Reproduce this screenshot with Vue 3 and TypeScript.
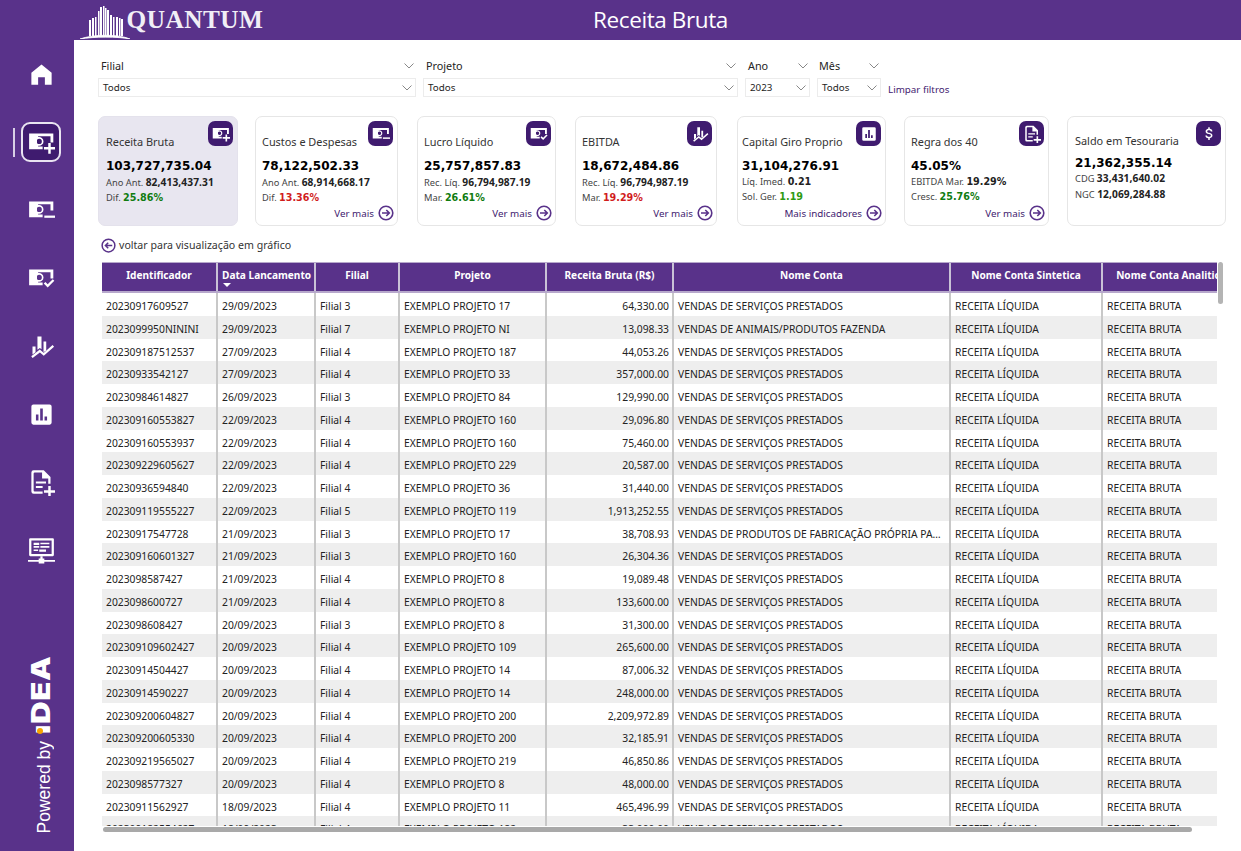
<script setup lang="ts">
interface Line {
  label: string
  value: string
  tone?: 'up' | 'down' | 'ok'
}

interface Card {
  title: string
  value: string
  icon: string
  lines: Line[]
  link?: string
  width: number
  gap: number
  pad: number
}

const bill =
  '<path d="M1 1h21.500v8h-2.500V3.500h-12v9H13V15H1z"/><path fill-rule="evenodd" d="M3 3h6v1.200a3.900 3.900 0 1 1 0 7.600V13H3zM10 5.700a2.300 2.300 0 1 0 0 4.600 2.300 2.300 0 0 0 0-4.600z"/>'

const money = (extra: string) => `<g transform="translate(0 3)">${bill}${extra}</g>`

const icons: Record<string, string> = {
  home: '<path d="M12 3 3 10.500V21h6v-6.500h6V21h6V10.500z"/>',
  plus: money('<path d="M18 9.500h2.200V13H24v2.200h-3.800V19H18v-3.800h-3.800V13H18z"/>'),
  minus: money('<path d="M14.500 13.500H24v2h-9.500z"/>'),
  check: money('<path d="m14 13.500 1.500-1.400 2 2 4.500-4.400 1.400 1.400-5.900 5.900z"/>'),
  chart:
    '<path d="M4 12h2.700v5.200L4 19.200zM8.400 3H12v11.500l-1.500-1.200-2.100 1.600zM13.800 7.500h2.400v8l-2.400 1.500z"/><path fill="none" stroke="currentColor" stroke-width="2" d="M3.500 21.500 10.500 16l3.500 3 8.500-7.500"/>',
  bar: '<g transform="translate(1.200 1.200) scale(.9)"><path fill-rule="evenodd" d="M4 2h16a2 2 0 0 1 2 2v16a2 2 0 0 1-2 2H4a2 2 0 0 1-2-2V4a2 2 0 0 1 2-2zm2.500 10v6H9v-6zm4.200-6v12h2.600V6zm4.300 8v4h2.500v-4z"/></g>',
  doc: '<path fill-rule="evenodd" d="M5 1h9l6 6v6h-2V8.500h-5.500V3H6a1 1 0 0 0-1 1v15a1 1 0 0 0 1 1h7v2H5a2 2 0 0 1-2-2V3a2 2 0 0 1 2-2z"/><path d="M7 11h9v1.800H7zM7 15h6v1.800H7zM18 15h2.200v3.800H24V21h-3.800v3H18v-3h-3.800v-2.200H18z"/>',
  monitor:
    '<path fill-rule="evenodd" d="M2 1h20a1 1 0 0 1 1 1v14a1 1 0 0 1-1 1H2a1 1 0 0 1-1-1V2a1 1 0 0 1 1-1zm1 2v12h18V3z"/><path d="M5 5h5v2H5zM11 5h8v1.500h-8zM5 8h5v1.500H5zM11 8h8v1.500h-8zM5 11h4v1.500H5zM10 11h6v2h-6zM11 17h2v2h1.500v1.500H24V22h-9.500v1.500h-5V22H0v-1.500h9.500V19H11z"/>',
  dollar:
    '<path d="M11 3h2v2.100c2 .3 3.400 1.500 3.600 3.400h-2.200c-.2-1-1-1.600-2.400-1.600-1.500 0-2.400.6-2.400 1.600 0 1 .8 1.400 2.800 1.900 2.500.6 4.200 1.400 4.200 3.700 0 1.900-1.400 3.100-3.600 3.500V20h-2v-2.400c-2.200-.3-3.800-1.600-3.900-3.700h2.200c.2 1.200 1.100 1.900 2.700 1.900s2.500-.7 2.500-1.700c0-1-.8-1.500-2.800-2-2.500-.6-4.200-1.400-4.200-3.600 0-1.800 1.400-3 3.500-3.400z"/>',
}

const nav = ['home', 'plus', 'minus', 'check', 'chart', 'bar', 'doc', 'monitor']

const towers = [
  [9, 17, 2], [12, 15, 2], [15, 14, 1.5], [18, 8, 1.5], [20, 4, 2], [23, 3, 1.5], [25, 5, 1.5],
  [27, 7, 2], [30, 12, 2], [33, 14, 1.5], [36, 14, 2], [39, 15, 1.5], [41, 16, 2],
]

const cards: Card[] = [
  {
    title: 'Receita Bruta',
    value: '103,727,735.04',
    icon: 'plus',
    lines: [
      { label: 'Ano Ant.', value: '82,413,437.31' },
      { label: 'Dif.', value: '25.86%', tone: 'up' },
    ],
    width: 140,
    gap: 17,
    pad: 7,
  },
  {
    title: 'Custos e Despesas',
    value: '78,122,502.33',
    icon: 'minus',
    lines: [
      { label: 'Ano Ant.', value: '68,914,668.17' },
      { label: 'Dif.', value: '13.36%', tone: 'down' },
    ],
    link: 'Ver mais',
    width: 143,
    gap: 19,
    pad: 6,
  },
  {
    title: 'Lucro Líquido',
    value: '25,757,857.83',
    icon: 'check',
    lines: [
      { label: 'Rec. Líq.', value: '96,794,987.19' },
      { label: 'Mar.', value: '26.61%', tone: 'up' },
    ],
    link: 'Ver mais',
    width: 139,
    gap: 19,
    pad: 6,
  },
  {
    title: 'EBITDA',
    value: '18,672,484.86',
    icon: 'chart',
    lines: [
      { label: 'Rec. Líq.', value: '96,794,987.19' },
      { label: 'Mar.', value: '19.29%', tone: 'down' },
    ],
    link: 'Ver mais',
    width: 142,
    gap: 20,
    pad: 6,
  },
  {
    title: 'Capital Giro Proprio',
    value: '31,104,276.91',
    icon: 'bar',
    lines: [
      { label: 'Líq. Imed.', value: '0.21' },
      { label: 'Sol. Ger.', value: '1.19', tone: 'ok' },
    ],
    link: 'Mais indicadores',
    width: 149,
    gap: 18,
    pad: 4,
  },
  {
    title: 'Regra dos 40',
    value: '45.05%',
    icon: 'doc',
    lines: [
      { label: 'EBITDA Mar.', value: '19.29%' },
      { label: 'Cresc.', value: '25.76%', tone: 'up' },
    ],
    link: 'Ver mais',
    width: 145,
    gap: 18,
    pad: 6,
  },
  {
    title: 'Saldo em Tesouraria',
    value: '21,362,355.14',
    icon: 'dollar',
    lines: [
      { label: 'CDG', value: '33,431,640.02' },
      { label: 'NGC', value: '12,069,284.88' },
    ],
    width: 159,
    gap: 0,
    pad: 7,
  },
]

const filters = [
  { label: 'Filial', value: 'Todos', kind: 'filial' },
  { label: 'Projeto', value: 'Todos', kind: 'projeto' },
  { label: 'Ano', value: '2023', kind: 'ano' },
  { label: 'Mês', value: 'Todos', kind: 'mes' },
]

const columns = [
  'Identificador',
  'Data Lancamento',
  'Filial',
  'Projeto',
  'Receita Bruta (R$)',
  'Nome Conta',
  'Nome Conta Sintetica',
  'Nome Conta Analitica',
]

const servicos = 'VENDAS DE SERVIÇOS PRESTADOS'

const rows: [string, string, number, string, string, string][] = [
  ['20230917609527', '29/09/2023', 3, '17', '64,330.00', servicos],
  ['2023099950NININI', '29/09/2023', 7, 'NI', '13,098.33', 'VENDAS DE ANIMAIS/PRODUTOS FAZENDA'],
  ['202309187512537', '27/09/2023', 4, '187', '44,053.26', servicos],
  ['20230933542127', '27/09/2023', 4, '33', '357,000.00', servicos],
  ['20230984614827', '26/09/2023', 3, '84', '129,990.00', servicos],
  ['202309160553827', '22/09/2023', 4, '160', '29,096.80', servicos],
  ['202309160553937', '22/09/2023', 4, '160', '75,460.00', servicos],
  ['202309229605627', '22/09/2023', 4, '229', '20,587.00', servicos],
  ['20230936594840', '22/09/2023', 4, '36', '31,440.00', servicos],
  ['202309119555227', '22/09/2023', 5, '119', '1,913,252.55', servicos],
  ['20230917547728', '21/09/2023', 3, '17', '38,708.93', 'VENDAS DE PRODUTOS DE FABRICAÇÃO PRÓPRIA PARA VENDA'],
  ['202309160601327', '21/09/2023', 3, '160', '26,304.36', servicos],
  ['2023098587427', '21/09/2023', 4, '8', '19,089.48', servicos],
  ['2023098600727', '21/09/2023', 4, '8', '133,600.00', servicos],
  ['2023098608427', '20/09/2023', 3, '8', '31,300.00', servicos],
  ['202309109602427', '20/09/2023', 4, '109', '265,600.00', servicos],
  ['20230914504427', '20/09/2023', 4, '14', '87,006.32', servicos],
  ['20230914590227', '20/09/2023', 4, '14', '248,000.00', servicos],
  ['202309200604827', '20/09/2023', 4, '200', '2,209,972.89', servicos],
  ['202309200605330', '20/09/2023', 4, '200', '32,185.91', servicos],
  ['202309219565027', '20/09/2023', 4, '219', '46,850.86', servicos],
  ['2023098577327', '20/09/2023', 4, '8', '48,000.00', servicos],
  ['20230911562927', '18/09/2023', 4, '11', '465,496.99', servicos],
  ['202309182554627', '18/09/2023', 4, '182', '33,000.00', servicos],
]
</script>

<template>
  <div class="page">
    <aside class="sidebar">
      <nav class="nav">
        <div v-for="name in nav" :key="name" class="nav-item" :class="{ active: name === 'plus' }">
          <span class="nav-box">
            <svg class="nav-icon" viewBox="0 0 24 24" v-html="icons[name]"></svg>
          </span>
        </div>
      </nav>
      <div class="powered">
        <span class="powered-text">Powered by</span>
        <span class="idea"><span class="idea-i">ı</span>DEA</span>
      </div>
    </aside>

    <div class="main">
      <header class="topbar">
        <div class="logo">
          <svg class="logo-mark" viewBox="0 0 54 36">
            <rect
              v-for="t in towers"
              :key="t[0]"
              :x="t[0]"
              :y="t[1]"
              :width="t[2]"
              :height="33 - t[1]"
              fill="#fff"
            />
            <path d="M0 36C14 31 38 31 50 36 38 33.500 14 33.500 0 36z" fill="#fff" stroke="#fff" stroke-width=".8" />
          </svg>
          <span class="logo-text">QUANTUM</span>
        </div>
        <h1 class="title">Receita Bruta</h1>
      </header>

      <section class="content">
        <div class="filters">
          <div v-for="f in filters" :key="f.label" class="filter" :class="f.kind">
            <div class="filter-label">
              <span>{{ f.label }}</span>
              <svg class="chevron" viewBox="0 0 10 6"><path d="M.5.5 5 5 9.500.5" /></svg>
            </div>
            <div class="select">
              <span>{{ f.value }}</span>
              <svg class="chevron" viewBox="0 0 10 6"><path d="M.5.5 5 5 9.500.5" /></svg>
            </div>
          </div>
          <a class="clear">Limpar filtros</a>
        </div>

        <div class="cards">
          <article
            v-for="(c, i) in cards"
            :key="c.title"
            class="card"
            :class="{ current: i === 0 }"
            :style="{ width: c.width + 'px', marginRight: c.gap + 'px', paddingLeft: c.pad + 'px' }"
          >
            <span class="card-icon">
              <svg viewBox="0 0 24 24" v-html="icons[c.icon]"></svg>
            </span>
            <div class="card-title">{{ c.title }}</div>
            <div class="card-value">{{ c.value }}</div>
            <div v-for="l in c.lines" :key="l.label" class="card-line">
              {{ l.label }} <b :class="[l.tone, { wide: l.value.length < 8 }]">{{ l.value }}</b>
            </div>
            <div v-if="c.link" class="card-link">
              {{ c.link }}
              <svg class="round-arrow" viewBox="0 0 16 16">
                <circle cx="8" cy="8" r="6.800" />
                <path d="M4 8h7M8.300 5l3 3-3 3" />
              </svg>
            </div>
          </article>
        </div>

        <div class="back">
          <svg class="round-arrow" viewBox="0 0 16 16">
            <circle cx="8" cy="8" r="6.800" />
            <path d="M12 8H5M7.700 5l-3 3 3 3" />
          </svg>
          voltar para visualização em gráfico
        </div>

        <div class="table-wrap">
          <div class="table">
            <div class="thead">
              <div v-for="(col, i) in columns" :key="col" class="th" :class="{ sorted: i === 1 }">
                {{ col }}
              </div>
            </div>
            <div v-for="r in rows" :key="r[0]" class="tr">
              <div class="td">{{ r[0] }}</div>
              <div class="td">{{ r[1] }}</div>
              <div class="td">Filial {{ r[2] }}</div>
              <div class="td">EXEMPLO PROJETO {{ r[3] }}</div>
              <div class="td num">{{ r[4] }}</div>
              <div class="td">{{ r[5] }}</div>
              <div class="td">RECEITA LÍQUIDA</div>
              <div class="td">RECEITA BRUTA</div>
            </div>
          </div>
          <span class="scroll-v"></span>
          <span class="scroll-h"></span>
        </div>
      </section>
    </div>
  </div>
</template>

<style>
html,
body {
  margin: 0;
  background: #fff;
}
</style>

<style scoped>
.page {
  display: flex;
  width: 1241px;
  height: 851px;
  overflow: hidden;
  font-family: 'Noto Sans', sans-serif;
  font-size: 10.300px;
  color: #252423;
  background: #fff;
}

.sidebar {
  width: 74px;
  flex: none;
  display: flex;
  flex-direction: column;
  background: #59328a;
  padding: 40px 0 0 8px;
  box-sizing: border-box;
}

.nav-item {
  height: 68px;
  display: flex;
  align-items: center;
  justify-content: center;
  position: relative;
}

.nav-box {
  width: 40px;
  height: 40px;
  box-sizing: border-box;
  display: flex;
  align-items: center;
  justify-content: center;
  border-radius: 9px;
  color: #fff;
}

.nav-item.active .nav-box {
  background: #3f1b6f;
  border: 2px solid #e9e4f1;
}

.nav-item.active::before {
  content: '';
  position: absolute;
  left: 5px;
  top: 20px;
  width: 2px;
  height: 29px;
  background: #d9d0e6;
}

.nav-icon {
  width: 27px;
  height: 27px;
  fill: currentColor;
}

.powered {
  margin-top: auto;
  padding-bottom: 18px;
  display: flex;
  flex-direction: column-reverse;
  align-items: center;
  color: #fff;
}

.powered-text,
.idea {
  writing-mode: vertical-rl;
  white-space: nowrap;
  transform: rotate(180deg);
}

.powered-text {
  font-family: 'Liberation Sans', sans-serif;
  font-size: 17.500px;
  line-height: 20px;
  margin-left: 5px;
}

.idea {
  font-family: Inter, sans-serif;
  font-weight: 900;
  font-size: 26px;
  line-height: 24px;
  letter-spacing: 0.6px;
  margin-bottom: 13px;
  transform: rotate(180deg) scaleY(1.2);
}

.idea-i {
  position: relative;
  display: inline-block;
}

.idea-i::after {
  content: '';
  position: absolute;
  width: 6px;
  height: 5px;
  border-radius: 50%;
  background: #f5a300;
  right: 8px;
  top: 0;
}

.main {
  flex: 1;
  min-width: 0;
  display: flex;
  flex-direction: column;
}

.topbar {
  height: 40px;
  flex: none;
  display: grid;
  grid-template-columns: 1fr auto 1fr;
  align-items: center;
  padding-left: 6px;
  background: #59328a;
  color: #fff;
}

.logo {
  display: flex;
  align-items: center;
  height: 40px;
}

.logo-mark {
  width: 54px;
  height: 36px;
  flex: none;
  margin-top: 1px;
  margin-right: -7.500px;
}

.logo-text {
  font-family: 'Liberation Serif', serif;
  font-weight: 700;
  font-size: 25.300px;
  letter-spacing: 0.5px;
  color: #f1eef6;
  margin-top: -2px;
}

.title {
  margin: 0;
  font-family: 'Open Sans', sans-serif;
  font-weight: 400;
  font-size: 22.500px;
  letter-spacing: -0.4px;
  line-height: 40px;
}

.content {
  flex: 1;
  min-height: 0;
  padding: 17px 0 0 24px;
  display: flex;
  flex-direction: column;
}

.filters {
  display: flex;
  align-items: flex-end;
  height: 40px;
}

.filter {
  display: flex;
  flex-direction: column;
  flex: none;
}

.filter.filial {
  width: 318px;
  margin-right: 7px;
}

.filter.projeto {
  width: 315px;
  margin-right: 7px;
}

.filter.ano {
  width: 65px;
  margin-right: 7px;
}

.filter.mes {
  width: 64px;
  margin-right: 7px;
}

.filter-label {
  height: 21px;
  display: flex;
  align-items: center;
  justify-content: space-between;
  padding: 0 2px 4px 3px;
  box-sizing: border-box;
  font-size: 10.800px;
}

.filter.mes .filter-label {
  padding-left: 2px;
}

.select {
  height: 19px;
  box-sizing: border-box;
  border: 1px solid #ececec;
  display: flex;
  align-items: center;
  justify-content: space-between;
  padding: 0 3px 0 4px;
  font-size: 9.800px;
}

.chevron {
  width: 10px;
  height: 6px;
  fill: none;
  stroke: #7a7a7a;
  stroke-width: 0.9;
}

.clear {
  margin: 0 0 1px 0;
  color: #3f1b6f;
  font-size: 9.800px;
}

.cards {
  display: flex;
  margin-top: 19px;
}

.card {
  position: relative;
  flex: none;
  height: 110px;
  box-sizing: border-box;
  border: 1px solid #e6e6e6;
  border-radius: 7px;
  padding-top: 17px;
  background: #fff;
}

.card.current {
  background: #e8e6f0;
  border-color: #e4e2ec;
}

.card-icon {
  position: absolute;
  top: 4px;
  right: 4px;
  width: 25px;
  height: 25px;
  border-radius: 7px;
  background: #3f1b6f;
  color: #fff;
  display: flex;
  align-items: center;
  justify-content: center;
}

.card-icon svg {
  width: 18px;
  height: 18px;
  fill: currentColor;
}

.card-title {
  font-size: 10.900px;
  line-height: 16px;
  color: #333;
}

.card-value {
  margin-top: 8px;
  font-family: 'DejaVu Sans', sans-serif;
  font-weight: 700;
  font-size: 12px;
  line-height: 17px;
  color: #000;
}

.card:last-child {
  padding-top: 16px;
}

.card:last-child .card-value {
  margin-top: 6px;
  line-height: 16px;
}

.card-line {
  font-size: 9.300px;
  line-height: 14.500px;
  color: #444;
}

.card-line b {
  font-size: 10.200px;
  font-weight: 700;
  letter-spacing: 0.1px;
  color: #222;
}

.card-line b.wide {
  font-family: 'DejaVu Sans', sans-serif;
  font-size: 9.600px;
  letter-spacing: 0;
}

.card-line b.up {
  color: #107c10;
}

.card-line b.down {
  color: #d11d1d;
}

.card-line b.ok {
  color: #2f9a12;
}

.card-link {
  position: absolute;
  right: 3px;
  bottom: 4px;
  display: flex;
  align-items: center;
  gap: 4px;
  font-size: 9.800px;
  color: #3f1b6f;
}

.round-arrow {
  width: 16px;
  height: 16px;
  fill: none;
  stroke: #59328a;
  stroke-width: 1.600;
}

.back {
  display: flex;
  align-items: center;
  gap: 3px;
  height: 16px;
  margin: 11px 0 9px 3px;
  font-size: 10.600px;
  color: #333;
}

.back .round-arrow {
  width: 15px;
  height: 15px;
}

.table-wrap {
  position: relative;
  width: 1115px;
  height: 564px;
  margin-left: 4px;
}

.table {
  width: 100%;
  height: 100%;
  overflow: hidden;
}

.thead,
.tr {
  display: grid;
  grid-template-columns: 116px 98px 84px 147px 127px 277px 152px 138px;
  width: 1139px;
}

.thead {
  height: 31px;
  box-sizing: border-box;
  background: #59328a;
  border-top: 1px solid #b7a8cc;
  border-bottom: 2px solid #b7a8cc;
}

.th {
  position: relative;
  display: flex;
  align-items: flex-start;
  justify-content: center;
  padding-top: 4px;
  border-right: 2px solid #c9c2d6;
  box-sizing: border-box;
  color: #fff;
  font-weight: 700;
  font-size: 10.100px;
  line-height: 16px;
  white-space: nowrap;
}

.th.sorted {
  justify-content: flex-start;
  padding-left: 4px;
}

.th.sorted::after {
  content: '';
  position: absolute;
  left: 5px;
  bottom: 4px;
  border: 4px solid transparent;
  border-top-color: #fff;
  border-bottom-width: 0;
}

.tr {
  height: 22.750px;
}

.tr:nth-child(odd) {
  background: #eeeeee;
}

.td {
  box-sizing: border-box;
  border-right: 2px solid #c8c8c8;
  padding: 2px 3px 0 4px;
  line-height: 22.750px;
  white-space: nowrap;
  overflow: hidden;
  text-overflow: ellipsis;
  color: #222;
}

.td.num {
  text-align: right;
}

.scroll-v {
  position: absolute;
  left: 1116px;
  top: 0;
  width: 5px;
  height: 42px;
  border-radius: 3px;
  background: #b4b4b4;
}

.scroll-h {
  position: absolute;
  left: 1px;
  top: 565px;
  width: 1089px;
  height: 5px;
  border-radius: 3px;
  background: #a9a9a9;
}
</style>
